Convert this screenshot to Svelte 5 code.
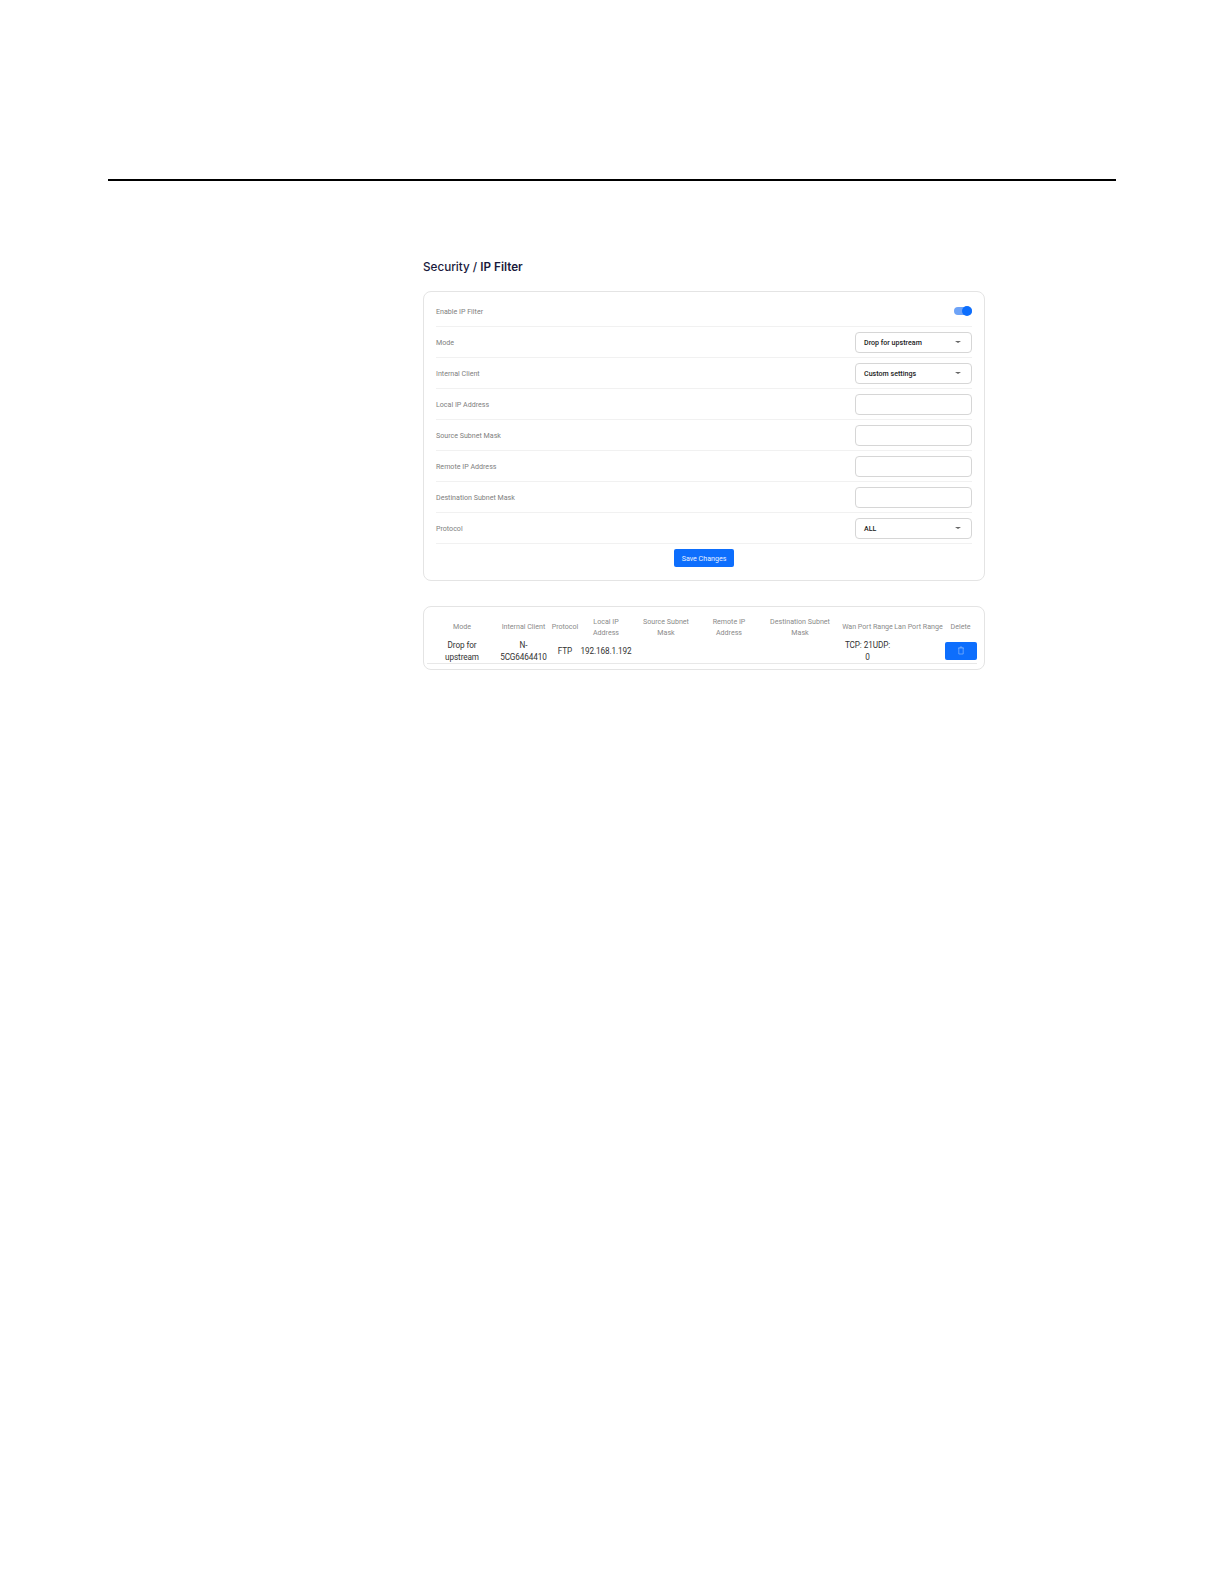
<script>
	const rows = [
		{ label: 'Enable IP Filter', type: 'toggle' },
		{ label: 'Mode', type: 'select', value: 'Drop for upstream' },
		{ label: 'Internal Client', type: 'select', value: 'Custom settings' },
		{ label: 'Local IP Address', type: 'input' },
		{ label: 'Source Subnet Mask', type: 'input' },
		{ label: 'Remote IP Address', type: 'input' },
		{ label: 'Destination Subnet Mask', type: 'input' },
		{ label: 'Protocol', type: 'select', value: 'ALL' }
	];

	const columns = [
		{ name: 'Mode', width: 70 },
		{ name: 'Internal Client', width: 53, nowrap: true },
		{ name: 'Protocol', width: 30, nowrap: true },
		{ name: 'Local IP Address', width: 52 },
		{ name: 'Source Subnet Mask', width: 68 },
		{ name: 'Remote IP Address', width: 58 },
		{ name: 'Destination Subnet Mask', width: 84 },
		{ name: 'Wan Port Range', width: 51, nowrap: true },
		{ name: 'Lan Port Range', width: 51, nowrap: true },
		{ name: 'Delete', width: 33, nowrap: true }
	];
</script>

<div class="page">
	<hr class="rule" />

	<main>
		<h1>Security / <strong>IP Filter</strong></h1>

		<section class="card form">
			{#each rows as row}
				<div class="row">
					<span class="label">{row.label}</span>
					{#if row.type === 'toggle'}
						<span class="toggle"><span class="knob"></span></span>
					{:else if row.type === 'select'}
						<div class="field select">
							<span>{row.value}</span>
							<i class="caret"></i>
						</div>
					{:else}
						<div class="field"></div>
					{/if}
				</div>
			{/each}
			<div class="actions">
				<button class="save">Save Changes</button>
			</div>
		</section>

		<section class="card list">
			<table>
				<colgroup>
					{#each columns as col}
						<col style="width: {col.width}px" />
					{/each}
				</colgroup>
				<thead>
					<tr>
						{#each columns as col}
							<th class:nowrap={col.nowrap}>{col.name}</th>
						{/each}
					</tr>
				</thead>
				<tbody>
					<tr>
						<td>Drop for upstream</td>
						<td>N-5CG6464410</td>
						<td>FTP</td>
						<td class="nowrap">192.168.1.192</td>
						<td></td>
						<td></td>
						<td></td>
						<td>TCP: 21UDP: 0</td>
						<td></td>
						<td>
							<button class="delete" aria-label="Delete">
								<svg width="8" height="9" viewBox="0 0 8 9" fill="none" stroke="#9cc3fb" stroke-width="0.6">
									<path d="M1 2h6M3 2V1h2v1M1.8 2v6h4.4V2" />
								</svg>
							</button>
						</td>
					</tr>
				</tbody>
			</table>
		</section>
	</main>
</div>

<style>
	:global(body) {
		background: #fff;
		font-family: Roboto, 'Liberation Sans', sans-serif;
	}

	.page {
		height: 1584px;
		padding: 179px 108px 0;
		box-sizing: border-box;
	}

	.rule {
		margin: 0;
		border: 0;
		height: 2px;
		background: #000;
	}

	main {
		width: 562px;
		margin: 78px 0 0 315px;
	}

	h1 {
		margin: 0 0 16px;
		font: 500 11.7px/16px Inter, sans-serif;
		color: #1a1a3c;
	}

	h1 strong {
		font-weight: 600;
	}

	.card {
		border: 1px solid #e4e4e4;
		border-radius: 8px;
		box-sizing: border-box;
	}

	.form {
		height: 290px;
		padding: 4px 12px 0;
	}

	.row {
		display: flex;
		align-items: center;
		justify-content: space-between;
		height: 31px;
		box-sizing: border-box;
		border-bottom: 1px solid #f1f1f1;
	}

	.label {
		font-size: 7.1px;
		color: #808080;
	}

	.toggle {
		display: block;
		position: relative;
		width: 18px;
		height: 8px;
		border-radius: 4px;
		background: #6ea3f7;
	}

	.knob {
		position: absolute;
		right: 0;
		top: -1px;
		width: 10px;
		height: 10px;
		border-radius: 50%;
		background: #0d6efd;
	}

	.field {
		width: 117px;
		height: 21px;
		box-sizing: border-box;
		border: 1px solid #d6d6d6;
		border-radius: 4px;
		background: #fff;
	}

	.select {
		display: flex;
		align-items: center;
		justify-content: space-between;
		padding: 0 10px 0 8px;
		font-size: 7.1px;
		font-weight: 500;
		color: #222;
	}

	.caret {
		width: 0;
		height: 0;
		border-left: 3px solid transparent;
		border-right: 3px solid transparent;
		border-top: 2.5px solid #666;
	}

	.actions {
		display: flex;
		justify-content: center;
		padding-top: 5px;
	}

	.save {
		width: 60px;
		height: 18px;
		padding: 0;
		border: 0;
		border-radius: 2px;
		background: #0d6efd;
		color: #e8f1ff;
		font: 400 7.1px Roboto, sans-serif;
	}

	.list {
		height: 64px;
		margin-top: 25px;
		padding: 0 3px;
		overflow: hidden;
	}

	table {
		width: 550px;
		table-layout: fixed;
		border-collapse: collapse;
	}

	th {
		height: 30px;
		padding: 10px 6px 0;
		box-sizing: border-box;
		font-size: 7.1px;
		font-weight: 400;
		line-height: 10.5px;
		color: #8a8a8a;
		text-align: center;
	}

	th.nowrap {
		padding-inline: 0;
	}

	td {
		height: 25px;
		padding: 0;
		font-size: 8.2px;
		letter-spacing: -0.1px;
		line-height: 12px;
		color: #333;
		text-align: center;
		border-bottom: 1px solid #e8e8e8;
	}

	td:first-child {
		padding: 0 8px;
	}

	.nowrap {
		white-space: nowrap;
	}

	.delete {
		display: flex;
		align-items: center;
		justify-content: center;
		width: 32px;
		height: 18px;
		margin-left: 1px;
		padding: 0;
		border: 0;
		border-radius: 2px;
		background: #0d6efd;
	}
</style>
